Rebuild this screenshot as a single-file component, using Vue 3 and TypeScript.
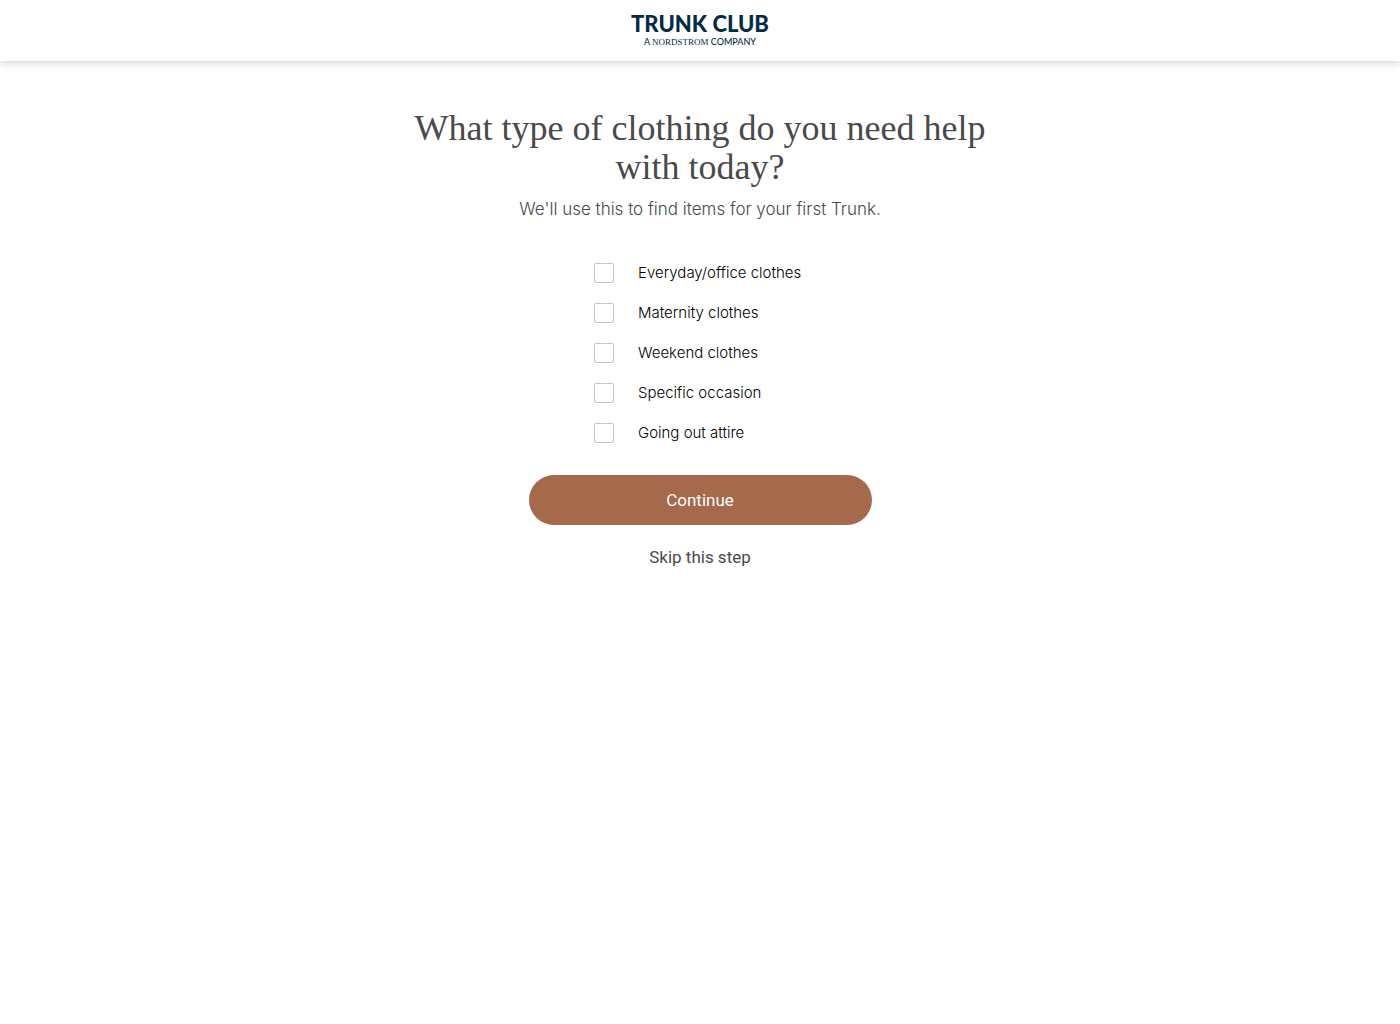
<script setup lang="ts">
import { ref } from 'vue'

interface ClothingOption {
  id: string
  label: string
}

const options: ClothingOption[] = [
  { id: 'everyday', label: 'Everyday/office clothes' },
  { id: 'maternity', label: 'Maternity clothes' },
  { id: 'weekend', label: 'Weekend clothes' },
  { id: 'occasion', label: 'Specific occasion' },
  { id: 'going-out', label: 'Going out attire' },
]

const selected = ref<string[]>([])
</script>

<template>
  <div class="page">
    <header class="header">
      <a class="logo" href="#">
        <span class="logo-name">TRUNK CLUB</span>
        <span class="logo-tagline">A <span class="nordstrom">NORDSTROM</span> COMPANY</span>
      </a>
    </header>

    <main class="content">
      <h1 class="title">What type of clothing do you need help with today?</h1>
      <p class="subtitle">We'll use this to find items for your first Trunk.</p>

      <form class="form" @submit.prevent>
        <div class="options">
          <label v-for="option in options" :key="option.id" class="option" :for="option.id">
            <input :id="option.id" v-model="selected" class="checkbox" type="checkbox" :value="option.id" />
            <span>{{ option.label }}</span>
          </label>
        </div>
        <button class="continue" type="submit">Continue</button>
        <button class="skip" type="button">Skip this step</button>
      </form>
    </main>
  </div>
</template>

<style>
body {
  margin: 0;
  background: #fff;
}
</style>

<style scoped>
.page {
  color: #4a4a4a;
  font-family: Roboto, "Liberation Sans", sans-serif;
}

.header {
  display: flex;
  justify-content: center;
  padding: 12px 0;
  background: #fff;
  box-shadow: 0 0 10px rgba(0, 0, 0, 0.25);
}

.logo {
  display: flex;
  flex-direction: column;
  align-items: center;
  color: #022b45;
  font-family: Lato, sans-serif;
  text-decoration: none;
  white-space: nowrap;
}

.logo-name {
  font-size: 22px;
  font-weight: 900;
  line-height: 23px;
}

.logo-tagline {
  font-size: 9px;
  font-weight: 500;
  line-height: 13px;
}

.nordstrom {
  font-family: "Liberation Serif", serif;
  font-weight: 400;
}

.content {
  box-sizing: border-box;
  max-width: 632px;
  margin: 0 auto;
  padding: 48px 16px;
  text-align: center;
}

.title {
  margin: 0;
  font-family: "Liberation Serif", serif;
  font-size: 36px;
  font-weight: 400;
  line-height: 39px;
}

.subtitle {
  margin: 9px 0 0;
  font-family: Inter, sans-serif;
  font-size: 17px;
  font-weight: 300;
  line-height: 26px;
}

.form {
  display: flex;
  flex-direction: column;
  align-items: center;
  margin-top: 41px;
}

.options {
  display: flex;
  flex-direction: column;
  gap: 20px;
  min-width: 212px;
}

.option {
  display: flex;
  align-items: center;
  gap: 24px;
  color: #000;
  font-family: Inter, sans-serif;
  font-size: 15px;
  font-weight: 300;
  line-height: 20px;
  cursor: pointer;
}

.checkbox {
  box-sizing: border-box;
  width: 20px;
  height: 20px;
  margin: 0;
  border: 1px solid #c4c4c4;
  border-radius: 2px;
  background: #fff;
  appearance: none;
  cursor: pointer;
}

.checkbox:checked {
  background: #a5694b;
}

.continue,
.skip {
  border: 0;
  font-family: inherit;
  font-size: 17px;
  font-weight: 400;
  cursor: pointer;
}

.continue {
  width: 100%;
  max-width: 343px;
  height: 50px;
  margin-top: 32px;
  border-radius: 25px;
  background: #a5694b;
  color: #fff;
}

.skip {
  margin-top: 22px;
  padding: 0;
  background: none;
  color: #4a4a4a;
  line-height: 20px;
}
</style>
